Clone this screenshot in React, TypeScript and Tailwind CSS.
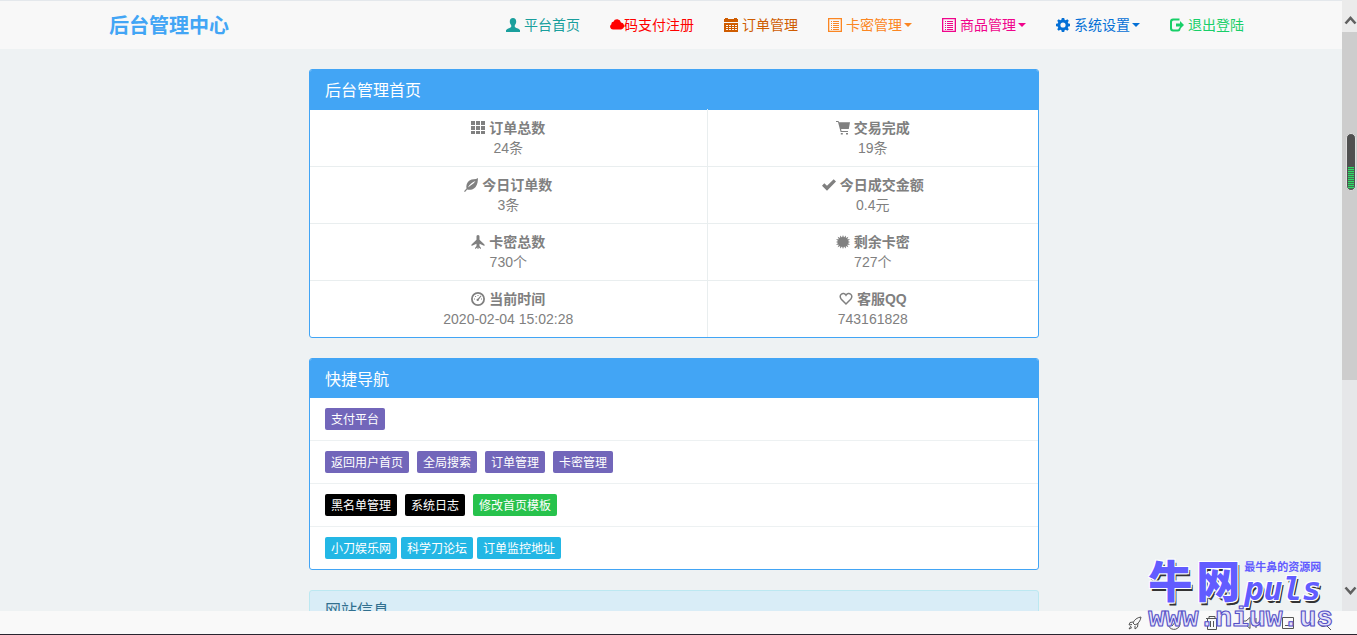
import type { ReactNode } from "react";

/* Icons, drawn on a 14px grid */

function Glyph({ children }: { children: ReactNode }) {
  return (
    <svg viewBox="0 0 14 14" className="h-3.5 w-3.5 shrink-0" fill="currentColor" aria-hidden>
      {children}
    </svg>
  );
}

const UserIcon = () => (
  <Glyph>
    <path d="M7 0C9.2 0 10.3 1.5 10.2 3.7C10.1 5.4 9.5 6.4 8.8 7.2V9C9.2 9.8 13 10.4 14 12.2V14H0V12.2C1 10.4 4.8 9.8 5.2 9V7.2C4.5 6.4 3.9 5.4 3.8 3.7C3.7 1.5 4.8 0 7 0Z" />
  </Glyph>
);

const CloudIcon = () => (
  <Glyph>
    <path d="M3 11.5A2.9 2.9 0 0 1 1.4 6.2A2.2 2.2 0 0 1 3.4 3.8A4 4 0 0 1 11 4.4A3.6 3.6 0 0 1 11.2 11.5Z" />
  </Glyph>
);

const CalendarIcon = () => (
  <Glyph>
    <path
      fillRule="evenodd"
      d="M1 0H4V1H10V0H13V1H14V4H0V1H1ZM0 5H14V14H0ZM2 7V8H4V7ZM5 7V8H7V7ZM8 7V8H10V7ZM11 7V8H13V7ZM2 9V10H4V9ZM5 9V10H7V9ZM8 9V10H10V9ZM11 9V10H13V9ZM2 11V12H4V11ZM5 11V12H7V11ZM8 11V12H10V11ZM11 11V12H13V11Z"
    />
  </Glyph>
);

const ListIcon = () => (
  <Glyph>
    <path
      fillRule="evenodd"
      d="M0 0H14V14H0ZM1.3 1.3V12.7H12.7V1.3ZM3 3H4V4H3ZM5 3H11V4H5ZM3 5H4V6H3ZM5 5H11V6H5ZM3 7H4V8H3ZM5 7H11V8H5ZM3 9H4V10H3ZM5 9H11V10H5ZM3 11H4V12H3ZM5 11H11V12H5Z"
    />
  </Glyph>
);

const CogIcon = () => (
  <Glyph>
    <path
      fillRule="evenodd"
      d="M5.8 0H8.2L8.6 1.8L9.8 2.3L11.3 1.3L12.8 2.8L11.8 4.3L12.3 5.5L14 5.8V8.2L12.3 8.5L11.8 9.7L12.8 11.2L11.3 12.7L9.8 11.7L8.6 12.2L8.2 14H5.8L5.4 12.2L4.2 11.7L2.7 12.7L1.2 11.2L2.2 9.7L1.7 8.5L0 8.2V5.8L1.7 5.5L2.2 4.3L1.2 2.8L2.7 1.3L4.2 2.3L5.4 1.8ZM7 4.4A2.6 2.6 0 1 0 7 9.6A2.6 2.6 0 1 0 7 4.4Z"
    />
  </Glyph>
);

const LogoutIcon = () => (
  <Glyph>
    <path d="M3 .5H9.5V2.5H3.6Q2 2.5 2 4.1V9.9Q2 11.5 3.6 11.5H7.4Q9 11.5 9 10V9.5H10.5V10.5Q10.5 13.5 8 13.5H3Q0 13.5 0 10.5V3.5Q0 .5 3 .5Z" />
    <path d="M10 3L14 7L10 11V8.4H6V5.6H10Z" />
  </Glyph>
);

const GridIcon = () => (
  <Glyph>
    <path d="M0 0H4V4H0ZM5 0H9V4H5ZM10 0H14V4H10ZM0 5H4V9H0ZM5 5H9V9H5ZM10 5H14V9H10ZM0 10H4V13H0ZM5 10H9V13H5ZM10 10H14V13H10Z" />
  </Glyph>
);

const CartIcon = () => (
  <Glyph>
    <path d="M0 0H2.4L3.2 1.2H14L12.8 8H5.1L5.5 10H12V11H4.6L2 1H0ZM4.8 12H6.8V13.5H4.8ZM10 12H12V13.5H10Z" />
  </Glyph>
);

const LeafIcon = () => (
  <Glyph>
    <path
      fillRule="evenodd"
      d="M14 0C13.8 2.5 13.8 6.3 11.6 9C9.3 11.7 6 12.2 3.2 11.5L1 14L0 13.2L2.5 10.5C1.8 7.5 3 4.3 5.5 2.5C8.2.7 11.5 1.8 14 0ZM11.5 3C8.5 4.2 5.6 6.2 3.8 9.6C6 7.6 9.3 6.5 11.5 3Z"
    />
  </Glyph>
);

const CheckIcon = () => (
  <Glyph>
    <path d="M0 7.7L2.3 5.2L5 7.7L11.7 1.2L14 3.6L5 12.7Z" />
  </Glyph>
);

const PlaneIcon = () => (
  <Glyph>
    <path d="M7 0C8.2 0 8.5.8 8.5 1.8V4.8L13.5 9.5V11L8.5 8.8V11L10 13V14L7.5 12.6V14H6.5V12.6L4 14V13L5.5 11V8.8L.5 11V9.5L5.5 4.8V1.8C5.5.8 5.8 0 7 0Z" />
  </Glyph>
);

const BurstIcon = () => (
  <Glyph>
    <path d="M7 0L8 2.6L9.9.6L9.9 3.1L12.4 1.7L11.2 4.3L14 4.2L11.9 6L14 7L11.9 8L14 9.8L11.2 9.7L12.4 12.3L9.9 10.9L9.9 13.4L8 11.4L7 14L6 11.4L4.1 13.4L4.1 10.9L1.6 12.3L2.8 9.7L0 9.8L2.1 8L0 7L2.1 6L0 4.2L2.8 4.3L1.6 1.7L4.1 3.1L4.1.6L6 2.6Z" />
  </Glyph>
);

const GaugeIcon = () => (
  <Glyph>
    <circle cx="7" cy="7" r="6.1" fill="none" stroke="currentColor" strokeWidth="1.8" />
    <path d="M9.7 3.5L10.5 4L7.9 7.6A1.2 1.2 0 1 1 6.8 6.7ZM3 6.5H4V7.5H3ZM4.1 4.1H5.1V5.1H4.1ZM6.5 3H7.5V4H6.5ZM10 6.5H11V7.5H10Z" />
  </Glyph>
);

const HeartIcon = () => (
  <Glyph>
    <path
      d="M7 3.2C6 1.3 3.7 1 2.3 2.2C.8 3.5.8 5.5 2.3 7.2L7 12L11.7 7.2C13.2 5.5 13.2 3.5 11.7 2.2C10.3 1 8 1.3 7 3.2Z"
      fill="none"
      stroke="currentColor"
      strokeWidth="1.5"
    />
  </Glyph>
);

const Caret = () => (
  <svg viewBox="0 0 8 4" className="ml-0.5 h-1 w-2" fill="currentColor" aria-hidden>
    <path d="M0 0H8L4 4Z" />
  </svg>
);

/* Data */

const navItems = [
  { label: "平台首页", icon: <UserIcon />, className: "gap-1 text-[#1a9f9d]", menu: false },
  { label: "码支付注册", icon: <CloudIcon />, className: "text-[#ff0000]", menu: false },
  { label: "订单管理", icon: <CalendarIcon />, className: "gap-1 text-[#cf5c00]", menu: false },
  { label: "卡密管理", icon: <ListIcon />, className: "gap-1 text-[#fb8622]", menu: true },
  { label: "商品管理", icon: <ListIcon />, className: "gap-1 text-[#f0048b]", menu: true },
  { label: "系统设置", icon: <CogIcon />, className: "gap-1 text-[#0470d6]", menu: true },
  { label: "退出登陆", icon: <LogoutIcon />, className: "gap-1 text-[#18cf68]", menu: false },
];

const stats = [
  [
    { label: "订单总数", value: "24条", icon: <GridIcon /> },
    { label: "交易完成", value: "19条", icon: <CartIcon /> },
  ],
  [
    { label: "今日订单数", value: "3条", icon: <LeafIcon /> },
    { label: "今日成交金额", value: "0.4元", icon: <CheckIcon /> },
  ],
  [
    { label: "卡密总数", value: "730个", icon: <PlaneIcon /> },
    { label: "剩余卡密", value: "727个", icon: <BurstIcon /> },
  ],
  [
    { label: "当前时间", value: "2020-02-04 15:02:28", icon: <GaugeIcon /> },
    { label: "客服QQ", value: "743161828", icon: <HeartIcon /> },
  ],
];

const purple = "bg-[#7266ba]";
const black = "bg-black";
const green = "bg-[#27c24c]";
const cyan = "bg-[#23b7e5]";

const shortcuts = [
  { gap: "gap-2", links: [{ label: "支付平台", color: purple }] },
  {
    gap: "gap-2",
    links: [
      { label: "返回用户首页", color: purple },
      { label: "全局搜索", color: purple },
      { label: "订单管理", color: purple },
      { label: "卡密管理", color: purple },
    ],
  },
  {
    gap: "gap-2",
    links: [
      { label: "黑名单管理", color: black },
      { label: "系统日志", color: black },
      { label: "修改首页模板", color: green },
    ],
  },
  {
    gap: "gap-1",
    links: [
      { label: "小刀娱乐网", color: cyan },
      { label: "科学刀论坛", color: cyan },
      { label: "订单监控地址", color: cyan },
    ],
  },
];

const meterBars = [36, 38, 40, 42, 44, 46, 48, 50, 52, 54, 56];

/* Sections */

function Navbar() {
  return (
    <header className="border-t border-[#e4e8ec] bg-[#f8f8f8]">
      <div className="mx-auto flex h-12 max-w-[1170px] items-center justify-between pl-5">
        <a href="#" className="pt-0.5 text-xl font-bold text-[#42a5f5]">
          后台管理中心
        </a>
        <nav className="flex text-sm">
          {navItems.map((item) => (
            <a key={item.label} href="#" className={`flex items-center px-[15px] ${item.className}`}>
              {item.icon}
              <span className="flex items-center">
                {item.label}
                {item.menu && <Caret />}
              </span>
            </a>
          ))}
        </nav>
      </div>
    </header>
  );
}

function Panel({ title, children }: { title: string; children: ReactNode }) {
  return (
    <section className="overflow-hidden rounded-[3px] border border-[#42a5f5] bg-white">
      <h2 className="flex h-[39px] items-center bg-[#42a5f5] px-[15px] pt-0.5 text-base text-white">
        {title}
      </h2>
      {children}
    </section>
  );
}

function StatsTable() {
  return (
    <table className="w-full table-fixed border-t border-[#42a5f5] text-center text-sm leading-5 text-[#808080]">
      <tbody>
        {stats.map((row, i) => (
          <tr key={i} className="border-t border-[#e9eeef] first:border-t-0">
            {row.map((cell) => (
              <td
                key={cell.label}
                className="py-2 first:w-6/11 first:border-r first:border-[#e9eeef]"
              >
                <div className="flex items-center justify-center gap-1 font-bold">
                  {cell.icon}
                  {cell.label}
                </div>
                <div>{cell.value}</div>
              </td>
            ))}
          </tr>
        ))}
      </tbody>
    </table>
  );
}

function Shortcuts() {
  return (
    <ul className="divide-y divide-[#edf1f2]">
      {shortcuts.map((row, i) => (
        <li key={i} className={`flex px-[15px] py-2.5 ${row.gap}`}>
          {row.links.map((link) => (
            <a
              key={link.label}
              href="#"
              className={`rounded-[2px] px-1.5 pt-0.5 text-xs leading-5 text-white ${link.color}`}
            >
              {link.label}
            </a>
          ))}
        </li>
      ))}
    </ul>
  );
}

function Scrollbar() {
  return (
    <div className="relative z-10 -ml-1.5 flex w-[15px] shrink-0 flex-col bg-[#e6e7e9]" aria-hidden>
      <svg viewBox="0 0 15 32" className="h-8 w-full bg-[#ebebeb]">
        <path d="M3.5 23.5L8.5 18L13.5 23.5" fill="none" stroke="#606060" strokeWidth="2.6" />
      </svg>
      <div className="flex h-[57%] flex-col bg-[#cdcdcd]">
        <svg viewBox="0 0 15 64" className="mt-[99px] h-16 w-full">
          <rect x="4.5" y="2.5" width="9" height="57" rx="4.5" fill="#505050" stroke="#e0e0e0" />
          {meterBars.map((y) => (
            <rect key={y} x="6" y={y} width="6" height="1.2" fill="#2be066" />
          ))}
        </svg>
      </div>
      <svg viewBox="0 0 15 40" className="mt-auto h-10 w-full">
        <path d="M3.5 16.5L8.5 22L13.5 16.5" fill="none" stroke="#606060" strokeWidth="2.6" />
      </svg>
    </div>
  );
}

function StatusBar() {
  return (
    <footer className="flex h-6 shrink-0 items-center justify-end border-b border-[#2a2530] bg-[#f9f9f9] pr-6 text-[#555]">
      <svg viewBox="0 0 206 16" className="h-4 w-[206px]" fill="none" stroke="currentColor" aria-hidden>
        <path d="M6 8C7 5 10 2.5 14 2C13.5 6 11 9 8 10ZM6 7L3 7.5L2 10L5 9.5M8 11V14L10.5 12L11 8M4 11L2 14L5 12.5" />
        <path d="M43 4A6 6 0 1 0 52 5A5 5 0 0 0 48 3M45 11L49 6V10" />
        <path d="M79 3.5H91M82 3V1.5H88V3M80.5 3.5V14.5H89.5V3.5M83.5 6V12M86.5 6V12" />
        <path d="M116 6H119L123 2.5V13.5L119 10H116ZM126 5V11M129 3V13" />
        <path d="M155.5 2.5H166.5V13.5H155.5ZM158 10.5H164" />
        <circle cx="196" cy="7" r="4.5" />
        <path d="M199 10L204 15" />
      </svg>
    </footer>
  );
}

function Watermark() {
  return (
    <div className="pointer-events-none absolute right-6 bottom-0.5 z-20 font-bold">
      <div className="flex gap-1 text-[#625cff] [text-shadow:-1px_-1px_0_#fff,1px_-1px_0_#fff,-1px_1px_0_#fff,1px_1px_0_#fff,2px_3px_0_#333]">
        <span className="text-[44px] leading-[44px] font-black">牛</span>
        <span className="text-[44px] leading-[44px] font-black">网</span>
        <div className="flex flex-col">
          <span className="text-[11px] leading-3 [text-shadow:none]">最牛鼻的资源网</span>
          <span className="font-['DejaVu_Sans_Mono',monospace] text-[32px] leading-8 italic">puls</span>
        </div>
      </div>
      <div className="font-['Liberation_Mono',monospace] text-[28px] leading-7 text-[#e4e2f8] [-webkit-text-stroke:1px_#5650c8] [text-shadow:0_0_1px_#5650c8]">
        www.niuw.us
      </div>
    </div>
  );
}

export default function App() {
  return (
    <div className="relative flex h-screen flex-col overflow-hidden bg-[#eef2f3] font-['Liberation_Sans','Noto_Sans_CJK_SC',sans-serif]">
      <div className="flex min-h-0 flex-1">
        <div className="min-w-0 flex-1 overflow-hidden">
          <Navbar />
          <main className="mx-auto mt-5 flex max-w-[730px] flex-col gap-5">
            <Panel title="后台管理首页">
              <StatsTable />
            </Panel>
            <Panel title="快捷导航">
              <Shortcuts />
            </Panel>
            <section className="rounded-[3px] border border-[#bce8f1] bg-[#d9edf7]">
              <h2 className="flex h-[39px] items-center px-[15px] text-base text-[#31708f]">网站信息</h2>
            </section>
          </main>
        </div>
        <Scrollbar />
      </div>
      <StatusBar />
      <Watermark />
    </div>
  );
}
